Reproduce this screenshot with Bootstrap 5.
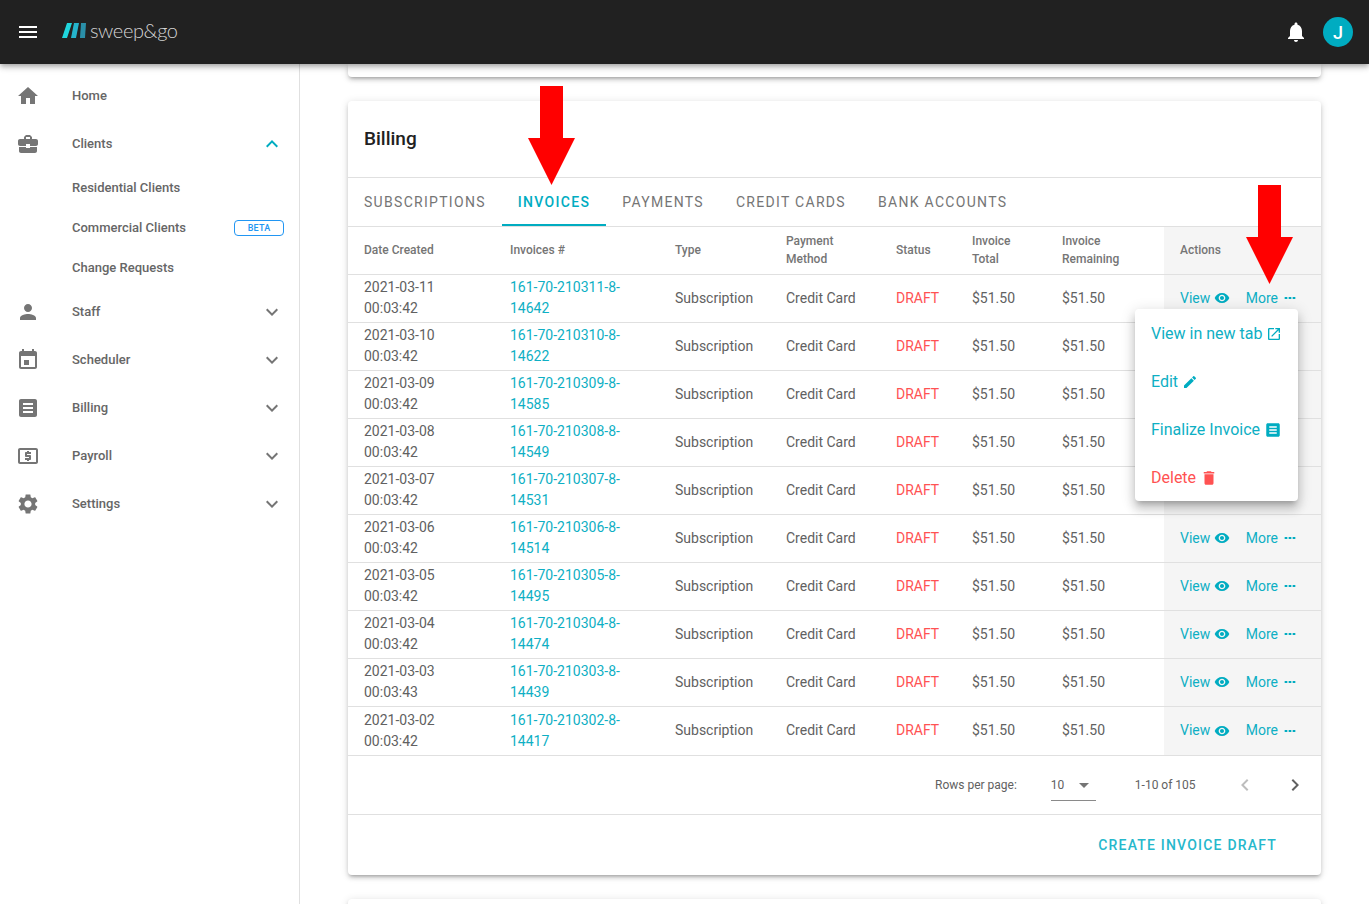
<!doctype html>
<html lang="en">
<head>
<meta charset="utf-8">
<title>Billing</title>
<link href="https://cdn.jsdelivr.net/npm/bootstrap@5.3.0/dist/css/bootstrap.min.css" rel="stylesheet">
<style>
html,body{height:100%}
body{font-family:Roboto,"Liberation Sans",sans-serif;overflow:hidden;background:#fff;color:#616161;font-size:14px}
svg{fill:currentColor;display:block;flex:none}
.sg-top{height:64px;background:#212121;color:#fff;position:relative;z-index:5;padding:0 16px;box-shadow:0 2px 4px -1px rgba(0,0,0,.2),0 4px 5px rgba(0,0,0,.14),0 1px 10px rgba(0,0,0,.12)}
.sg-logo{font-family:Lato,"Open Sans",sans-serif;font-weight:300;font-size:20px;letter-spacing:-.4px;color:#d4d4d4;line-height:1;margin-left:22px;margin-top:-4px}
.sg-avatar{width:30px;height:30px;border-radius:50%;background:#00acc1;font-size:18px;font-weight:500;color:#fff;margin-left:15px}
.sg-shell{height:840px}
.sg-side{width:300px;flex:none;border-right:1px solid #e0e0e0;padding-top:8px}
.sg-link{height:48px;padding:0 15px 0 16px;font-size:13px;font-weight:500;color:#666}
.sg-link .sg-ico{color:#757575;margin-right:32px}
.sg-link .sg-chev{color:#757575;margin-left:auto}
.sg-link .sg-chev.sg-open{color:#00acc1}
.sg-sub{height:40px;padding:0 15px 0 72px;font-size:13px;font-weight:500;color:#666}
.sg-beta{margin-left:auto;width:50px;height:16px;border:1px solid #2196f3;border-radius:4px;color:#2196f3;font-size:9px;line-height:14px;text-align:center;letter-spacing:.2px}
.sg-main{flex:1;padding:0 48px;display:flex;flex-direction:column;gap:24px;overflow:hidden}
.sg-card{background:#fff;border-radius:4px;box-shadow:0 3px 3px -2px rgba(0,0,0,.2),0 3px 4px rgba(0,0,0,.14),0 1px 8px rgba(0,0,0,.12);flex:none}
.sg-stub{height:13px;border-radius:0 0 4px 4px}
.sg-billing{position:relative;height:774px}
.sg-next{height:60px}
.sg-title{height:77px;padding:0 16px;font-size:19px;font-weight:500;color:#212121;border-bottom:1px solid #e0e0e0}
.sg-tabs{height:49px;border-bottom:1px solid #e0e0e0}
.sg-tab{padding:0 16px;height:48px;font-size:14px;font-weight:400;letter-spacing:1.3px;color:#757575;position:relative}
.sg-tab.sg-active{color:#00acc1;font-weight:500}
.sg-tab.sg-active::after{content:"";position:absolute;left:0;right:0;bottom:0;height:2px;background:#00acc1}
.sg-table{table-layout:fixed;width:973px;margin:0;color:#616161;font-size:14px;line-height:21px;font-weight:400}
.sg-table th,.sg-table td{padding:0 16px;vertical-align:middle;border-bottom:1px solid #e0e0e0;height:48px;background:transparent;box-shadow:none;color:#616161}
.sg-table th{font-size:12px;font-weight:500;line-height:18px;color:#757575;height:47px}
.sg-table tbody tr:last-child td{height:49px}
.sg-table th:nth-child(1){width:146px}
.sg-table th:nth-child(2){width:165px}
.sg-table th:nth-child(3){width:111px}
.sg-table th:nth-child(4){width:110px}
.sg-table th:nth-child(5){width:76px}
.sg-table th:nth-child(6){width:90px}
.sg-table th:nth-child(7){width:118px}
.sg-table th:nth-child(8){width:157px}
.sg-table td a{color:#0eafc4;text-decoration:none}
.sg-table .sg-draft{color:#ff5252}
.sg-table .sg-act{background:#f5f5f5;white-space:nowrap}
.sg-acts{color:#0eafc4;gap:4px}
.sg-acts svg{color:#00acc1}
.sg-acts span+svg+span{margin-left:11.5px}
.sg-pager{height:59px;border-bottom:1px solid #e0e0e0;font-size:12px;color:#616161;padding-left:587px}
.sg-select{width:45px;height:32px;border-bottom:1px solid #8a8a8a;margin-left:34px;margin-top:1px}
.sg-select svg{margin-left:auto;color:#757575}
.sg-range{margin-left:39px;width:98px}
.sg-pg-l{color:#bdbdbd;margin-right:26px}
.sg-pg-r{color:#616161}
.sg-foot{height:60px;padding:2px 44px 0 0;font-size:14px;font-weight:500;letter-spacing:1.2px;color:#26b8cc}
.sg-menu.dropdown-menu{position:absolute;display:block;top:208px;right:23px;left:auto;width:163px;padding:1px 0 0;margin:0;border:0;border-radius:4px;box-shadow:0 5px 5px -3px rgba(0,0,0,.2),0 8px 10px 1px rgba(0,0,0,.14),0 3px 14px 2px rgba(0,0,0,.12);z-index:3;font-size:16px;height:192px}
.sg-menu .dropdown-item{height:48px;padding:0 16px;color:#0eafc4;gap:4px;background:none}
.sg-menu .dropdown-item svg{color:#00acc1}
.sg-menu .dropdown-item.sg-del,.sg-menu .dropdown-item.sg-del svg{color:#ff5252}
.sg-arrow{position:absolute;fill:#f00;z-index:4}
.sg-a1{left:180px;top:-15px}
.sg-a2{left:898px;top:84px}
</style>
</head>
<body>
<svg width="0" height="0" style="position:absolute">
<defs>
<symbol id="i-menu" viewBox="0 0 24 24"><path d="M3 18h18v-2H3v2zm0-5h18v-2H3v2zm0-7v2h18V6H3z"/></symbol>
<symbol id="i-home" viewBox="0 0 24 24"><path d="M10 20v-6h4v6h5v-8h3L12 3 2 12h3v8z"/></symbol>
<symbol id="i-brief" viewBox="0 0 24 24"><path d="M10 16v-1H3.01L3 19c0 1.11.89 2 2 2h14c1.11 0 2-.89 2-2v-4h-7v1h-4zm10-9h-4.01V5l-2-2h-4l-2 2v2H4c-1.1 0-2 .9-2 2v3c0 1.11.89 2 2 2h6v-2h4v2h6c1.1 0 2-.9 2-2V9c0-1.1-.9-2-2-2zm-6 0h-4V5h4v2z"/></symbol>
<symbol id="i-person" viewBox="0 0 24 24"><path d="M12 12c2.21 0 4-1.79 4-4s-1.79-4-4-4-4 1.79-4 4 1.79 4 4 4zm0 2c-2.67 0-8 1.34-8 4v2h16v-2c0-2.66-5.33-4-8-4z"/></symbol>
<symbol id="i-event" viewBox="0 0 24 24"><path d="M13 12H8v5h5v-5zM16 1v2H8V1H6v2H5c-1.11 0-1.99.9-1.99 2L3 19c0 1.1.89 2 2 2h14c1.1 0 2-.9 2-2V5c0-1.1-.9-2-2-2h-1V1h-2zm3 18H5V8h14v11z"/></symbol>
<symbol id="i-doc" viewBox="0 0 24 24"><path d="M19 3H5c-1.1 0-2 .9-2 2v14c0 1.1.9 2 2 2h14c1.1 0 2-.9 2-2V5c0-1.1-.9-2-2-2zm-2 14H7v-2h10v2zm0-4H7v-2h10v2zm0-4H7V7h10v2z"/></symbol>
<symbol id="i-atm" viewBox="0 0 24 24"><path d="M11 17h2v-1h1c.55 0 1-.45 1-1v-3c0-.55-.45-1-1-1h-3v-1h4V8h-2V7h-2v1h-1c-.55 0-1 .45-1 1v3c0 .55.45 1 1 1h3v1H9v2h2v1zm9-13H4c-1.11 0-1.99.89-1.99 2L2 18c0 1.11.89 2 2 2h16c1.11 0 2-.89 2-2V6c0-1.11-.89-2-2-2zm0 14H4V6h16v12z"/></symbol>
<symbol id="i-gear" viewBox="0 0 24 24"><path d="M19.14 12.94c.04-.3.06-.61.06-.94 0-.32-.02-.64-.07-.94l2.03-1.58c.18-.14.23-.41.12-.61l-1.92-3.32c-.12-.22-.37-.29-.59-.22l-2.39.96c-.5-.38-1.03-.7-1.62-.94l-.36-2.54c-.04-.24-.24-.41-.48-.41h-3.84c-.24 0-.43.17-.47.41l-.36 2.54c-.59.24-1.13.57-1.62.94l-2.39-.96c-.22-.08-.47 0-.59.22L2.74 8.87c-.12.21-.08.47.12.61l2.03 1.58c-.05.3-.09.63-.09.94s.02.64.07.94l-2.03 1.58c-.18.14-.23.41-.12.61l1.92 3.32c.12.22.37.29.59.22l2.39-.96c.5.38 1.03.7 1.62.94l.36 2.54c.05.24.24.41.48.41h3.84c.24 0 .44-.17.47-.41l.36-2.54c.59-.24 1.13-.56 1.62-.94l2.39.96c.22.08.47 0 .59-.22l1.92-3.32c.12-.22.07-.47-.12-.61l-2.01-1.58zM12 15.6c-1.98 0-3.6-1.62-3.6-3.6s1.62-3.6 3.6-3.6 3.6 1.62 3.6 3.6-1.62 3.6-3.6 3.6z"/></symbol>
<symbol id="i-bell" viewBox="0 0 24 24"><path d="M12 22c1.1 0 2-.9 2-2h-4c0 1.1.89 2 2 2zm6-6v-5c0-3.07-1.64-5.64-4.5-6.32V4c0-.83-.67-1.5-1.5-1.5s-1.5.67-1.5 1.5v.68C7.63 5.36 6 7.92 6 11v5l-2 2v1h16v-1l-2-2z"/></symbol>
<symbol id="i-eye" viewBox="0 0 24 24"><path d="M12 4.500C7 4.500 2.730 7.610 1 12c1.730 4.390 6 7.500 11 7.500s9.270-3.110 11-7.500c-1.730-4.390-6-7.500-11-7.500zM12 17c-2.760 0-5-2.240-5-5s2.240-5 5-5 5 2.240 5 5-2.240 5-5 5zm0-8c-1.660 0-3 1.340-3 3s1.340 3 3 3 3-1.340 3-3-1.340-3-3-3z"/></symbol>
<symbol id="i-dots" viewBox="0 0 24 24"><path d="M4 10.500h4v3H4zM10 10.500h4v3h-4zM16 10.500h4v3h-4z"/></symbol>
<symbol id="i-open" viewBox="0 0 24 24"><path d="M19 19H5V5h7V3H5c-1.110 0-2 .9-2 2v14c0 1.100.89 2 2 2h14c1.100 0 2-.9 2-2v-7h-2v7zM14 3v2h3.590l-9.830 9.830 1.410 1.410L19 6.410V10h2V3h-7z"/></symbol>
<symbol id="i-edit" viewBox="0 0 24 24"><path d="M3 17.250V21h3.750L17.810 9.940l-3.750-3.750L3 17.250zM20.710 7.040c.39-.39.39-1.020 0-1.410l-2.340-2.340c-.39-.39-1.020-.39-1.410 0l-1.830 1.830 3.750 3.750 1.830-1.830z"/></symbol>
<symbol id="i-trash" viewBox="0 0 24 24"><path d="M6 19c0 1.100.9 2 2 2h8c1.100 0 2-.9 2-2V7H6v12zM19 4h-3.500l-1-1h-5l-1 1H5v2h14V4z"/></symbol>
<symbol id="i-down" viewBox="0 0 24 24"><path d="M7.410 8.590 12 13.170l4.590-4.580L18 10l-6 6-6-6z"/></symbol>
<symbol id="i-up" viewBox="0 0 24 24"><path d="M7.410 15.410 12 10.830l4.590 4.580L18 14l-6-6-6 6z"/></symbol>
<symbol id="i-left" viewBox="0 0 24 24"><path d="M15.410 7.410 14 6l-6 6 6 6 1.410-1.410L10.830 12z"/></symbol>
<symbol id="i-right" viewBox="0 0 24 24"><path d="M10 6 8.590 7.410 13.170 12l-4.580 4.590L10 18l6-6z"/></symbol>
<symbol id="i-caret" viewBox="0 0 24 24"><path d="M7 10l5 5 5-5z"/></symbol>
<symbol id="i-arrow" viewBox="0 0 47 99"><path d="M12 0h23v52h12L23.500 99 0 52h12z"/></symbol>
</defs>
</svg>

<header class="sg-top d-flex align-items-center">
  <svg width="24" height="24"><use href="#i-menu"/></svg>
  <div class="sg-logo d-flex align-items-center gap-1">
    <svg width="24" height="15" viewBox="0 0 24 15"><path fill="#1fd6dd" d="M5 0h5L5 15H0z"/><path fill="#25b4cc" d="M12 0h5l-3 15H9z"/><path fill="#2a8fa8" d="M19 0h5l-1 15h-5z"/></svg>
    <span>sweep&amp;go</span>
  </div>
  <div class="ms-auto d-flex align-items-center">
    <svg width="24" height="24"><use href="#i-bell"/></svg>
    <div class="sg-avatar d-flex align-items-center justify-content-center">J</div>
  </div>
</header>

<div class="sg-shell d-flex">
  <nav class="sg-side">
    <div class="sg-link d-flex align-items-center"><svg class="sg-ico" width="24" height="24"><use href="#i-home"/></svg>Home</div>
    <div class="sg-link d-flex align-items-center"><svg class="sg-ico" width="24" height="24"><use href="#i-brief"/></svg>Clients<svg class="sg-chev sg-open" width="24" height="24"><use href="#i-up"/></svg></div>
    <div class="sg-sub d-flex align-items-center">Residential Clients</div>
    <div class="sg-sub d-flex align-items-center">Commercial Clients<span class="sg-beta">BETA</span></div>
    <div class="sg-sub d-flex align-items-center">Change Requests</div>
    <div class="sg-link d-flex align-items-center"><svg class="sg-ico" width="24" height="24"><use href="#i-person"/></svg>Staff<svg class="sg-chev" width="24" height="24"><use href="#i-down"/></svg></div>
    <div class="sg-link d-flex align-items-center"><svg class="sg-ico" width="24" height="24"><use href="#i-event"/></svg>Scheduler<svg class="sg-chev" width="24" height="24"><use href="#i-down"/></svg></div>
    <div class="sg-link d-flex align-items-center"><svg class="sg-ico" width="24" height="24"><use href="#i-doc"/></svg>Billing<svg class="sg-chev" width="24" height="24"><use href="#i-down"/></svg></div>
    <div class="sg-link d-flex align-items-center"><svg class="sg-ico" width="24" height="24"><use href="#i-atm"/></svg>Payroll<svg class="sg-chev" width="24" height="24"><use href="#i-down"/></svg></div>
    <div class="sg-link d-flex align-items-center"><svg class="sg-ico" width="24" height="24"><use href="#i-gear"/></svg>Settings<svg class="sg-chev" width="24" height="24"><use href="#i-down"/></svg></div>
  </nav>

  <main class="sg-main">
    <div class="sg-card sg-stub"></div>
    <section class="sg-card sg-billing">
      <svg class="sg-arrow sg-a1" width="47" height="99"><use href="#i-arrow"/></svg>
      <svg class="sg-arrow sg-a2" width="47" height="99"><use href="#i-arrow"/></svg>
      <div class="sg-title d-flex align-items-center">Billing</div>
      <div class="sg-tabs d-flex">
        <div class="sg-tab d-flex align-items-center">SUBSCRIPTIONS</div>
        <div class="sg-tab sg-active d-flex align-items-center">INVOICES</div>
        <div class="sg-tab d-flex align-items-center">PAYMENTS</div>
        <div class="sg-tab d-flex align-items-center">CREDIT CARDS</div>
        <div class="sg-tab d-flex align-items-center">BANK ACCOUNTS</div>
      </div>
      <table class="table sg-table">
        <thead><tr><th>Date Created</th><th>Invoices #</th><th>Type</th><th>Payment Method</th><th>Status</th><th>Invoice Total</th><th>Invoice Remaining</th><th class="sg-act">Actions</th></tr></thead>
        <tbody>
          <tr><td>2021-03-11 00:03:42</td><td><a href="#">161-70-210311-8-14642</a></td><td>Subscription</td><td>Credit Card</td><td class="sg-draft">DRAFT</td><td>$51.50</td><td>$51.50</td><td class="sg-act"><div class="sg-acts d-flex align-items-center"><span>View</span><svg width="16" height="16"><use href="#i-eye"/></svg><span>More</span><svg width="16" height="16"><use href="#i-dots"/></svg></div></td></tr>
          <tr><td>2021-03-10 00:03:42</td><td><a href="#">161-70-210310-8-14622</a></td><td>Subscription</td><td>Credit Card</td><td class="sg-draft">DRAFT</td><td>$51.50</td><td>$51.50</td><td class="sg-act"></td></tr>
          <tr><td>2021-03-09 00:03:42</td><td><a href="#">161-70-210309-8-14585</a></td><td>Subscription</td><td>Credit Card</td><td class="sg-draft">DRAFT</td><td>$51.50</td><td>$51.50</td><td class="sg-act"></td></tr>
          <tr><td>2021-03-08 00:03:42</td><td><a href="#">161-70-210308-8-14549</a></td><td>Subscription</td><td>Credit Card</td><td class="sg-draft">DRAFT</td><td>$51.50</td><td>$51.50</td><td class="sg-act"></td></tr>
          <tr><td>2021-03-07 00:03:42</td><td><a href="#">161-70-210307-8-14531</a></td><td>Subscription</td><td>Credit Card</td><td class="sg-draft">DRAFT</td><td>$51.50</td><td>$51.50</td><td class="sg-act"></td></tr>
          <tr><td>2021-03-06 00:03:42</td><td><a href="#">161-70-210306-8-14514</a></td><td>Subscription</td><td>Credit Card</td><td class="sg-draft">DRAFT</td><td>$51.50</td><td>$51.50</td><td class="sg-act"><div class="sg-acts d-flex align-items-center"><span>View</span><svg width="16" height="16"><use href="#i-eye"/></svg><span>More</span><svg width="16" height="16"><use href="#i-dots"/></svg></div></td></tr>
          <tr><td>2021-03-05 00:03:42</td><td><a href="#">161-70-210305-8-14495</a></td><td>Subscription</td><td>Credit Card</td><td class="sg-draft">DRAFT</td><td>$51.50</td><td>$51.50</td><td class="sg-act"><div class="sg-acts d-flex align-items-center"><span>View</span><svg width="16" height="16"><use href="#i-eye"/></svg><span>More</span><svg width="16" height="16"><use href="#i-dots"/></svg></div></td></tr>
          <tr><td>2021-03-04 00:03:42</td><td><a href="#">161-70-210304-8-14474</a></td><td>Subscription</td><td>Credit Card</td><td class="sg-draft">DRAFT</td><td>$51.50</td><td>$51.50</td><td class="sg-act"><div class="sg-acts d-flex align-items-center"><span>View</span><svg width="16" height="16"><use href="#i-eye"/></svg><span>More</span><svg width="16" height="16"><use href="#i-dots"/></svg></div></td></tr>
          <tr><td>2021-03-03 00:03:43</td><td><a href="#">161-70-210303-8-14439</a></td><td>Subscription</td><td>Credit Card</td><td class="sg-draft">DRAFT</td><td>$51.50</td><td>$51.50</td><td class="sg-act"><div class="sg-acts d-flex align-items-center"><span>View</span><svg width="16" height="16"><use href="#i-eye"/></svg><span>More</span><svg width="16" height="16"><use href="#i-dots"/></svg></div></td></tr>
          <tr><td>2021-03-02 00:03:42</td><td><a href="#">161-70-210302-8-14417</a></td><td>Subscription</td><td>Credit Card</td><td class="sg-draft">DRAFT</td><td>$51.50</td><td>$51.50</td><td class="sg-act"><div class="sg-acts d-flex align-items-center"><span>View</span><svg width="16" height="16"><use href="#i-eye"/></svg><span>More</span><svg width="16" height="16"><use href="#i-dots"/></svg></div></td></tr>
        </tbody>
      </table>
      <div class="sg-pager d-flex align-items-center">
        <span>Rows per page:</span>
        <div class="sg-select d-flex align-items-center"><span>10</span><svg width="24" height="24"><use href="#i-caret"/></svg></div>
        <span class="sg-range">1-10 of 105</span>
        <svg class="sg-pg-l" width="24" height="24"><use href="#i-left"/></svg>
        <svg class="sg-pg-r" width="24" height="24"><use href="#i-right"/></svg>
      </div>
      <div class="sg-foot d-flex align-items-center justify-content-end">CREATE INVOICE DRAFT</div>
      <div class="dropdown-menu sg-menu">
        <a class="dropdown-item d-flex align-items-center" href="#">View in new tab<svg width="16" height="16"><use href="#i-open"/></svg></a>
        <a class="dropdown-item d-flex align-items-center" href="#">Edit<svg width="16" height="16"><use href="#i-edit"/></svg></a>
        <a class="dropdown-item d-flex align-items-center" href="#">Finalize Invoice<svg width="18" height="18"><use href="#i-doc"/></svg></a>
        <a class="dropdown-item sg-del d-flex align-items-center" href="#">Delete<svg width="18" height="18"><use href="#i-trash"/></svg></a>
      </div>
    </section>
    <div class="sg-card sg-next"></div>
  </main>
</div>
<script src="https://cdn.jsdelivr.net/npm/bootstrap@5.3.0/dist/js/bootstrap.bundle.min.js"></script>
</body>
</html>
